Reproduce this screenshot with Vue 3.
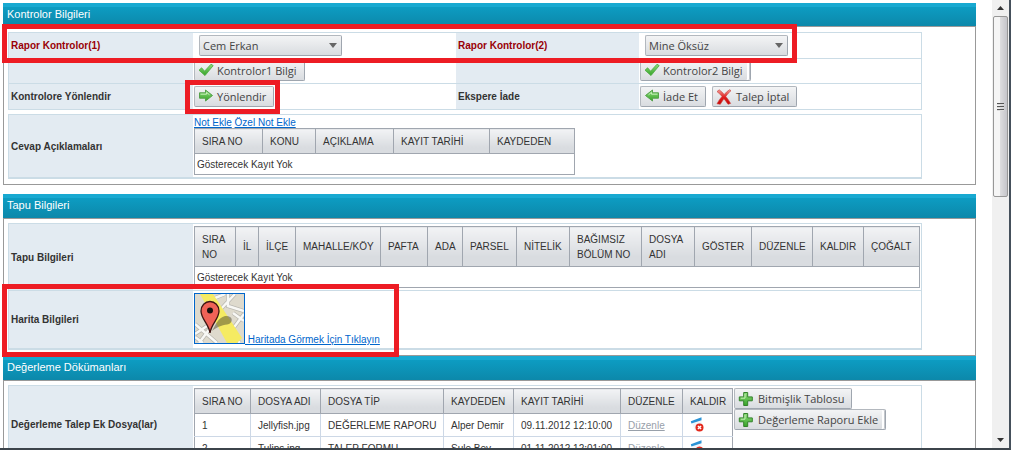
<script setup>
import { ref } from 'vue'

const controller1 = ref('Cem Erkan')
const controller2 = ref('Mine Öksüz')

const noteColumns = [
  { title: 'SIRA NO', width: 68 },
  { title: 'KONU', width: 53 },
  { title: 'AÇIKLAMA', width: 78 },
  { title: 'KAYIT TARİHİ', width: 96 },
  { title: 'KAYDEDEN', width: 85 },
]
const deedColumns = [
  { title: 'SIRA\nNO', width: 41 },
  { title: 'İL', width: 23 },
  { title: 'İLÇE', width: 37 },
  { title: 'MAHALLE/KÖY', width: 85 },
  { title: 'PAFTA', width: 47 },
  { title: 'ADA', width: 35 },
  { title: 'PARSEL', width: 54 },
  { title: 'NİTELİK', width: 53 },
  { title: 'BAĞIMSIZ\nBÖLÜM NO', width: 72 },
  { title: 'DOSYA\nADI', width: 53 },
  { title: 'GÖSTER', width: 57 },
  { title: 'DÜZENLE', width: 61 },
  { title: 'KALDIR', width: 51 },
  { title: 'ÇOĞALT', width: 56 },
]
const fileColumns = [
  { title: 'SIRA NO', width: 56 },
  { title: 'DOSYA ADI', width: 70 },
  { title: 'DOSYA TİP', width: 123 },
  { title: 'KAYDEDEN', width: 70 },
  { title: 'KAYIT TARİHİ', width: 107 },
  { title: 'DÜZENLE', width: 62 },
  { title: 'KALDIR', width: 50 },
]
const files = [
  { no: 1, name: 'Jellyfish.jpg', type: 'DEĞERLEME RAPORU', by: 'Alper Demir', date: '09.11.2012 12:10:00' },
  { no: 2, name: 'Tulips.jpg', type: 'TALEP FORMU', by: 'Sule Bey', date: '01.11.2012 12:01:00' },
]
const total = (cols) => cols.reduce((sum, c) => sum + c.width, 0) + 'px'
</script>

<template>
  <div class="window">
    <svg class="defs" aria-hidden="true">
      <defs>
        <linearGradient id="green" x1="0" y1="0" x2="0" y2="1">
          <stop offset="0" stop-color="#8fdc7c" />
          <stop offset="1" stop-color="#35a327" />
        </linearGradient>
        <linearGradient id="red" x1="0" y1="0" x2="0" y2="1">
          <stop offset="0" stop-color="#f4a09a" />
          <stop offset=".5" stop-color="#e02020" />
          <stop offset="1" stop-color="#c80808" />
        </linearGradient>
        <symbol id="check" viewBox="0 0 16 14">
          <path d="M1 7.200 3.600 4.800 6.600 8.200 13 1.200l2.200 1.400L7 12.600Z" fill="url(#green)" stroke="#4aa83f" stroke-width=".8" stroke-linejoin="round" />
        </symbol>
        <symbol id="arrow" viewBox="0 0 16 14">
          <path d="M1.500 3.800h6V1l7 5.500-7 5.500V9.200h-6Z" fill="url(#green)" stroke="#55a14b" stroke-linejoin="round" />
          <path d="M2.500 5.200h6V3.400l3 2.400" fill="none" stroke="#c5f0b8" />
        </symbol>
        <symbol id="cross" viewBox="0 0 16 16">
          <path d="M1 2.600 3.200.8c2 1.400 3.600 3 5 4.700 1.600-2 3.400-3.600 5.400-4.800l1.400 1C12.800 3.500 11.200 5.300 9.800 7.400c2 2.400 3.500 4.700 4.800 7L12 15.300c-1.300-2-2.600-3.800-4.100-5.500-1.300 1.800-2.500 3.600-3.600 5.500l-3.300-.6C2.400 12 4.100 9.600 6 7.400 4.500 5.600 2.900 4 1 2.600Z" fill="url(#red)" stroke="#c93a36" stroke-width=".6" />
        </symbol>
        <symbol id="plus" viewBox="0 0 16 16">
          <path d="M5.700 1.500h4v4.400h4.600v3.900H9.700v4.700h-4V9.800H1.300V5.900h4.400Z" fill="url(#green)" stroke="#34822c" stroke-linejoin="round" />
          <path d="M7 3v4.200H2.800" fill="none" stroke="#c3efb4" />
        </symbol>
        <symbol id="remove" viewBox="0 0 14 16">
          <path d="m1.500 5 10-3.500v8L5 14Z" fill="#f3f6f9" />
          <path d="m.8 4.200 10.700-4v3L1.400 6.600Z" fill="#2b93d6" />
          <circle cx="9.500" cy="10.500" r="4" fill="#e3291c" />
          <path d="m7.900 8.900 3.200 3.200m0-3.200-3.200 3.200" stroke="#fff" stroke-width="1.400" />
        </symbol>
      </defs>
    </svg>

    <main class="page">
      <section class="panel">
        <h2>Kontrolor Bilgileri</h2>
        <div class="body">
          <div class="form">
            <div class="row four">
              <label class="name required" for="controller1">Rapor Kontrolor(1)</label>
              <div class="value pick">
                <span class="combo">
                  <select id="controller1" v-model="controller1"><option>Cem Erkan</option></select>
                  <svg viewBox="0 0 8 5"><path d="M0 0h8L4 5Z" /></svg>
                </span>
              </div>
              <label class="name required" for="controller2">Rapor Kontrolor(2)</label>
              <div class="value pick">
                <span class="combo">
                  <select id="controller2" v-model="controller2"><option>Mine Öksüz</option></select>
                  <svg viewBox="0 0 8 5"><path d="M0 0h8L4 5Z" /></svg>
                </span>
              </div>
              <span class="mark mark-controllers"></span>
            </div>
            <div class="row four short">
              <div class="name"></div>
              <div class="value"><button type="button"><svg><use href="#check" /></svg>Kontrolor1 Bilgi</button></div>
              <div class="name"></div>
              <div class="value"><button type="button" class="split"><svg><use href="#check" /></svg>Kontrolor2 Bilgi</button></div>
            </div>
            <div class="row four">
              <div class="name">Kontrolore Yönlendir</div>
              <div class="value">
                <span class="marked">
                  <button type="button"><svg><use href="#arrow" /></svg>Yönlendir</button>
                  <span class="mark mark-forward"></span>
                </span>
              </div>
              <div class="name">Ekspere İade</div>
              <div class="value">
                <button type="button"><svg class="back"><use href="#arrow" /></svg>İade Et</button>
                <button type="button"><svg class="large"><use href="#cross" /></svg>Talep İptal</button>
              </div>
            </div>
          </div>
          <div class="form last">
            <div class="row">
              <div class="name">Cevap Açıklamaları</div>
              <div class="value stack notes">
                <div class="links"><a href="#">Not Ekle</a> <a href="#">Özel Not Ekle</a></div>
                <table :style="{ width: total(noteColumns) }">
                  <colgroup><col v-for="c in noteColumns" :key="c.title" :style="{ width: c.width + 'px' }" /></colgroup>
                  <thead><tr><th v-for="c in noteColumns" :key="c.title">{{ c.title }}</th></tr></thead>
                  <tbody><tr><td class="empty" :colspan="noteColumns.length">Gösterecek Kayıt Yok</td></tr></tbody>
                </table>
              </div>
            </div>
          </div>
        </div>
      </section>

      <section class="panel tight flush">
        <h2>Tapu Bilgileri</h2>
        <div class="body">
          <div class="form last">
            <div class="row">
              <div class="name">Tapu Bilgileri</div>
              <div class="value stack">
                <table :style="{ width: total(deedColumns) }">
                  <colgroup><col v-for="c in deedColumns" :key="c.title" :style="{ width: c.width + 'px' }" /></colgroup>
                  <thead><tr class="tall"><th v-for="c in deedColumns" :key="c.title">{{ c.title }}</th></tr></thead>
                  <tbody><tr><td class="empty" :colspan="deedColumns.length">Gösterecek Kayıt Yok</td></tr></tbody>
                </table>
              </div>
            </div>
            <div class="row">
              <div class="name">Harita Bilgileri</div>
              <div class="value map-value">
                <a class="map" href="#">
                  <svg viewBox="0 0 49 49">
                    <rect width="49" height="49" fill="#dedacd" />
                    <path d="M20 4 30 0M0 30 22 49M25 16 40 0M18 22 45 49M34 40 49 20M38 19l11 8M4 49l12-16M33 0v12l16 5M0 40l12-8M8 49l-8-6" stroke="#b9b7b0" stroke-width="4" fill="none" />
                    <path d="M20 4 30 0M0 30 22 49M25 16 40 0M18 22 45 49M34 40 49 20M38 19l11 8M4 49l12-16M33 0v12l16 5M0 40l12-8M8 49l-8-6" stroke="#f8f8f5" stroke-width="2.500" fill="none" />
                    <path d="M5 0h13l29 44-5 5H32Z" fill="#f5eb62" />
                    <path d="M17 37c4-7 6-13 13-15 7-1 9 5 4 8-5 1-11 2-17 7" fill="#4d4930" opacity=".5" />
                    <path d="M15 39C14 30 6 25 6 17a9 9.500 0 0 1 18 0c0 8-8 13-9 22Z" fill="#ef6257" stroke="#3d1512" stroke-width="1.300" />
                    <circle cx="15" cy="16.500" r="3" fill="#17110f" />
                  </svg><span>&nbsp;Haritada Görmek İçin Tıklayın</span>
                </a>
              </div>
              <span class="mark mark-map"></span>
            </div>
          </div>
        </div>
      </section>

      <section class="panel tight">
        <h2>Değerleme Dökümanları</h2>
        <div class="body">
          <div class="form last">
            <div class="row">
              <div class="name">Değerleme Talep Ek Dosya(lar)</div>
              <div class="value files">
                <table :style="{ width: total(fileColumns) }">
                  <colgroup><col v-for="c in fileColumns" :key="c.title" :style="{ width: c.width + 'px' }" /></colgroup>
                  <thead><tr><th v-for="c in fileColumns" :key="c.title">{{ c.title }}</th></tr></thead>
                  <tbody>
                    <tr v-for="f in files" :key="f.no">
                      <td>{{ f.no }}</td>
                      <td>{{ f.name }}</td>
                      <td>{{ f.type }}</td>
                      <td>{{ f.by }}</td>
                      <td>{{ f.date }}</td>
                      <td><a class="muted" href="#">Düzenle</a></td>
                      <td><a class="remove" href="#" aria-label="Kaldır"><svg><use href="#remove" /></svg></a></td>
                    </tr>
                  </tbody>
                </table>
                <div class="actions">
                  <button type="button"><svg class="large"><use href="#plus" /></svg>Bitmişlik Tablosu</button>
                  <button type="button" class="split"><svg class="large"><use href="#plus" /></svg>Değerleme Raporu Ekle</button>
                </div>
              </div>
            </div>
          </div>
        </div>
      </section>
    </main>

    <div class="scrollbar" aria-hidden="true">
      <svg class="tip" viewBox="0 0 7 4"><path d="M0 4h7L3.500 0Z" /></svg>
      <div class="track"><div class="thumb"><i></i><i></i><i></i></div></div>
      <svg class="tip" viewBox="0 0 7 4"><path d="M0 0h7L3.500 4Z" /></svg>
    </div>
  </div>
</template>

<style>
body {
  background: #fff;
}
</style>

<style scoped>
* {
  box-sizing: border-box;
}
.window {
  display: flex;
  height: calc(100vh - 9px);
  margin-right: 2px;
  overflow: hidden;
  border-right: 2px solid #45505b;
  border-bottom: 2px solid #3c444b;
  background: #fff;
  color: #333;
  font: 10px/15px "Liberation Sans", Arial, sans-serif;
}
.defs {
  position: absolute;
  width: 0;
  height: 0;
}
.page {
  flex: 1;
  min-width: 0;
  padding: 3px 16px 0 3px;
  overflow: hidden;
}
.panel {
  margin-bottom: 9px;
}
.panel.flush {
  margin-bottom: 0;
}
h2 {
  height: 24px;
  margin: 0;
  padding: 0 4px;
  background: linear-gradient(#18a9d1 0 4px, #0d9cc2 4px, #0c88aa);
  color: #fff;
  font-size: 11px;
  font-weight: 400;
  line-height: 23px;
}
.panel:first-child h2 {
  height: 23px;
}
.body {
  padding: 5px 53px 5px 4px;
  border: 1px solid #999;
}
.tight .body {
  padding-top: 4px;
}
.form {
  border: 1px solid #cbdce6;
  border-bottom: 0;
}
.form + .form {
  margin-top: 4px;
}
.form.last {
  border-bottom: 1px solid #cbdce6;
}
.row {
  position: relative;
  display: grid;
  grid-template-columns: 184px 1fr;
  min-height: 26px;
  border-bottom: 1px solid #cbdce6;
}
.row.four {
  grid-template-columns: 184px 263fr 183px 282fr;
}
.row.short {
  min-height: 25px;
}
.name {
  display: flex;
  align-items: center;
  padding: 0 2px;
  background: #e3ebf2;
  font-weight: 700;
}
.required {
  color: #990007;
}
.value {
  display: flex;
  gap: 6px;
  align-items: flex-start;
  padding: 2px 1px;
}
.short .value {
  padding-top: 1px;
  padding-bottom: 0;
}
.pick {
  padding-left: 6px;
}
.stack {
  display: block;
}
.notes {
  padding-top: 0;
  padding-bottom: 2px;
}
.links {
  height: 13px;
}
a {
  color: #0066cc;
}
.muted {
  color: #98a0aa;
}
button,
select {
  height: 21px;
  border: 1px solid #b3b8be;
  border-right-color: #9fa6af;
  border-bottom-color: #9fa6af;
  border-radius: 2px;
  background: linear-gradient(#f3f4f5, #d9dce0);
  color: #444;
  font: 11px/18px "Open Sans", "Noto Sans", sans-serif;
}
button {
  display: flex;
  align-items: center;
  padding: 0 7px 0 3px;
  white-space: nowrap;
}
button svg {
  width: 16px;
  height: 14px;
  margin: 0 3px 2px 0;
}
button .large {
  height: 16px;
  margin: 0 4px 0 0;
}
button .back {
  transform: scaleX(-1);
}
button.split {
  box-shadow: inset -1px 0 #c4c7cc, inset -3px 0 #fff;
}
.combo {
  position: relative;
  display: inline-block;
  width: 143px;
}
.combo select {
  display: block;
  width: 100%;
  padding: 0 20px 0 3px;
  appearance: none;
}
.combo svg {
  position: absolute;
  top: 8px;
  right: 5px;
  width: 8px;
  height: 5px;
  fill: #666;
  pointer-events: none;
}
.marked {
  position: relative;
}
.mark {
  position: absolute;
  z-index: 2;
  border: 5px solid #ed1c24;
  pointer-events: none;
}
.mark-controllers {
  inset: -9px 124px -5px -7px;
}
.mark-forward {
  inset: -6px -6px -7px -9px;
}
.mark-map {
  top: -7px;
  bottom: -9px;
  left: -7px;
  width: 397px;
}
table {
  table-layout: fixed;
  border: 1px solid #a0a6af;
  border-collapse: collapse;
}
th,
td {
  padding: 0 7px;
  text-align: left;
  white-space: pre;
}
th {
  height: 25px;
  border: 1px solid #a0a6af;
  background: linear-gradient(#f2f3f5, #d9dce0 75%);
  font-weight: 400;
}
.tall th {
  height: 40px;
}
td {
  height: 23px;
  border: 1px solid #cdd8e6;
}
td:first-child {
  border-left-color: #a0a6af;
}
td:last-child {
  border-right-color: #a0a6af;
}
tr:last-child td {
  border-bottom-color: #a0a6af;
}
td.empty {
  height: 21px;
  padding: 0 2px;
}
.map-value {
  padding-bottom: 4px;
}
.map {
  display: flex;
  align-items: flex-end;
}
.map svg {
  width: 51px;
  height: 51px;
  border: 1px solid #0066cc;
}
.map span {
  line-height: 9px;
}
.files {
  gap: 1px;
}
.actions {
  display: flex;
  flex-direction: column;
  align-items: flex-start;
}
.remove svg {
  display: block;
  width: 14px;
  height: 16px;
}
.scrollbar {
  display: flex;
  flex-direction: column;
  align-items: center;
  width: 17px;
  padding: 6px 0;
  background: #f0f0f0;
}
.tip {
  width: 7px;
  height: 4px;
  fill: #333;
}
.track {
  flex: 1;
  width: 15px;
  padding-top: 6px;
}
.thumb {
  display: flex;
  flex-direction: column;
  gap: 1px;
  align-items: center;
  justify-content: center;
  height: 43%;
  border: 1px solid #979797;
  border-radius: 2px;
  background: linear-gradient(90deg, #f5f5f5 45%, #dcdcde 50%, #c5c5ca);
}
.thumb i {
  width: 7px;
  height: 2px;
  border-top: 1px solid #555;
  background: #ddd;
}
</style>
